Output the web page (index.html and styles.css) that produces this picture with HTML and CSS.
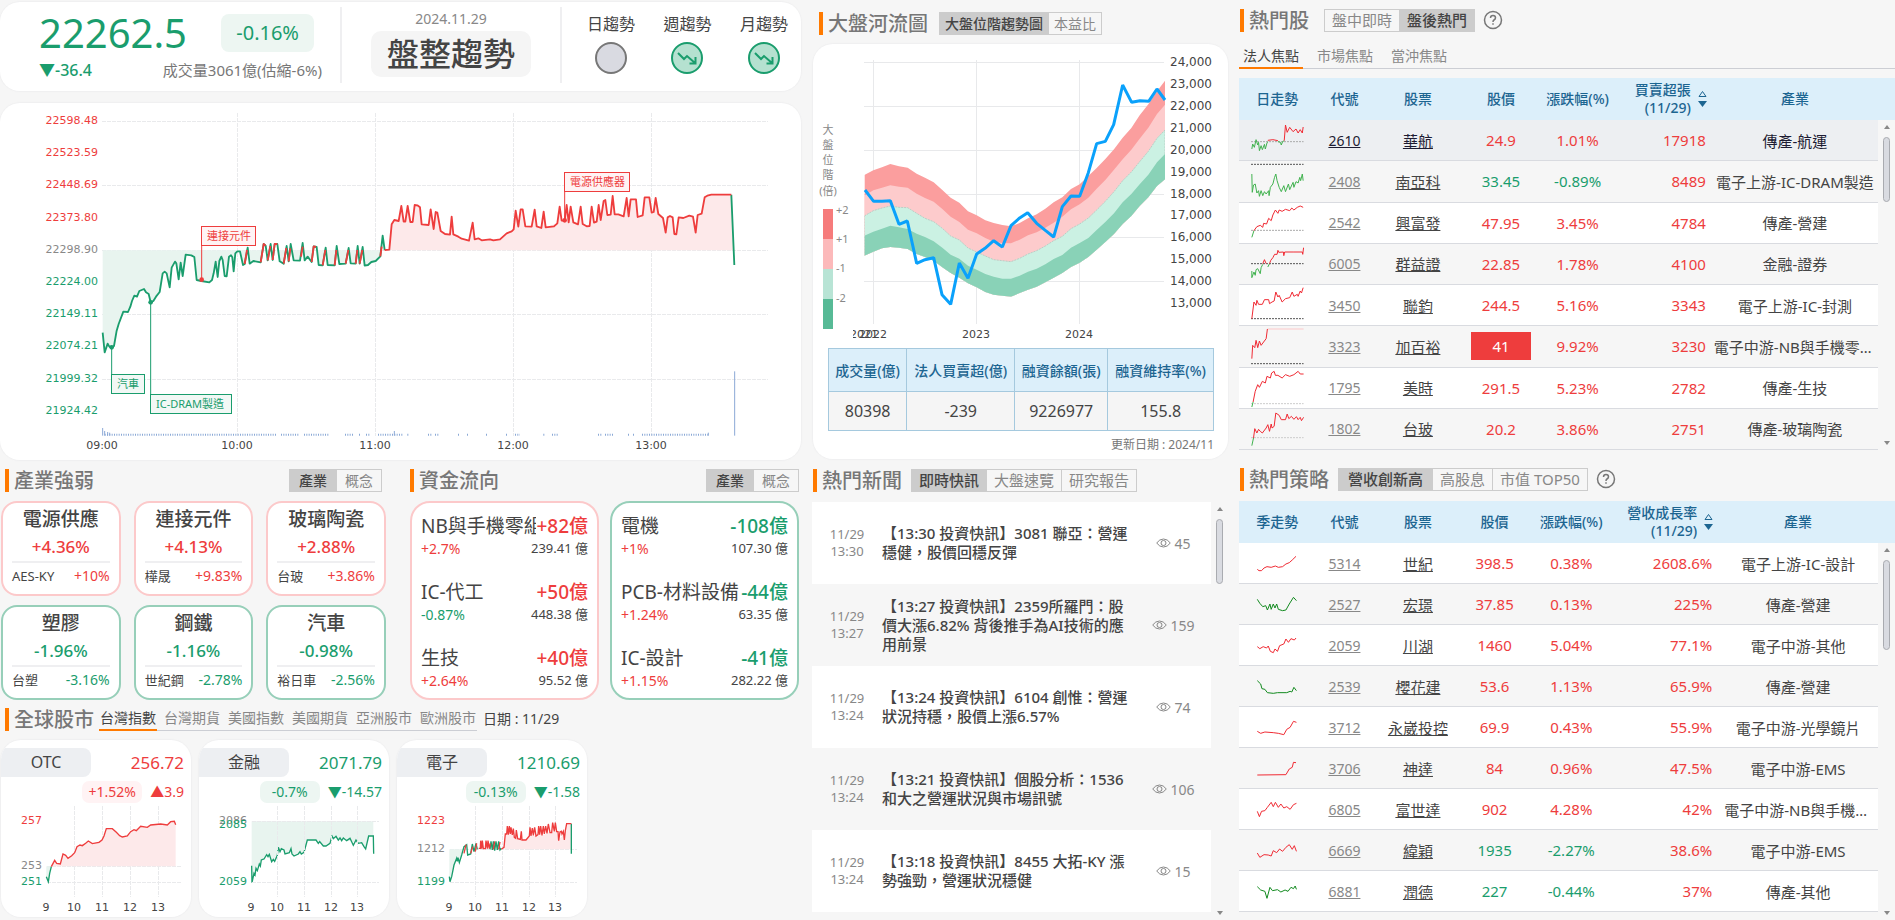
FILE: index.html
```html
<!DOCTYPE html>
<html lang="zh-Hant">
<head>
<meta charset="utf-8">
<meta name="viewport" content="width=device-width, initial-scale=1">
<title>盤整趨勢</title>
<link rel="stylesheet" href="styles.css">
</head>
<body>
<main class="dashboard">
<div class="col-left">
  <section class="card summary">
    <div class="quote">
      <div class="quote-row"><span class="index-value">22262.5</span><span class="index-badge">-0.16%</span></div>
      <div class="quote-row"><span class="index-diff">▼-36.4</span><span class="volume">成交量3061億(估縮-6%)</span></div>
    </div>
    <div class="state"><span class="state-date">2024.11.29</span><strong class="state-name">盤整趨勢</strong></div>
    <div class="trends">
      <div class="trend">日趨勢<svg width="32" height="32" viewBox="0 0 32 32"><circle cx="16" cy="16" r="15" fill="#d9dae1" stroke="#777" stroke-width="2"/></svg></div>
      <div class="trend">週趨勢<svg width="32" height="32" viewBox="0 0 32 32"><circle cx="16" cy="16" r="15" fill="#b5e1d0" stroke="#1a9d6d" stroke-width="2"/><path d="M7 11l6 6 3-3 8 7M24.500 15v6.500h-6" fill="none" stroke="#1a9d6d" stroke-width="2"/></svg></div>
      <div class="trend">月趨勢<svg width="32" height="32" viewBox="0 0 32 32"><circle cx="16" cy="16" r="15" fill="#b5e1d0" stroke="#1a9d6d" stroke-width="2"/><path d="M7 11l6 6 3-3 8 7M24.500 15v6.500h-6" fill="none" stroke="#1a9d6d" stroke-width="2"/></svg></div>
    </div>
  </section>

  <section class="card">
    <svg class="chart" viewBox="0 103 801 357" role="img" aria-label="大盤走勢">
      <g class="grid dashed"><path d="M102 121.500H768M102 185.500H768M102 250.500H768M102 314.500H768M102 379.500H768M237.500 113V436M375.500 113V436M513.500 113V436M651.500 113V436"/></g>
      <g class="axis" text-anchor="end">
        <g class="f-up"><text x="98" y="124">22598.48</text><text x="98" y="156">22523.59</text><text x="98" y="188">22448.69</text><text x="98" y="221">22373.80</text></g>
        <text class="f-mute" x="98" y="253">22298.90</text>
        <g class="f-down"><text x="98" y="285">22224.00</text><text x="98" y="317">22149.11</text><text x="98" y="349">22074.21</text><text x="98" y="382">21999.32</text><text x="98" y="414">21924.42</text></g>
      </g>
      <g class="axis" text-anchor="middle"><text x="102" y="449">09:00</text><text x="237" y="449">10:00</text><text x="375" y="449">11:00</text><text x="513" y="449">12:00</text><text x="651" y="449">13:00</text></g>
      <g transform="translate(0 100) scale(.33333)" fill="none" stroke-linejoin="round">
        <path fill="#e8f4ef" d="M308 451V698L314 757L323 731L328 740L336 742L342 738L350 692L356 672L370 635L384 636L391 620L403 587L411 590L418 573L432 567L446 582L452 607L468 590L479 576L488 520L500 520L509 562L515 503L525 485L536 538L542 488L548 528L557 464L583 471L590 540L628 547L641 520L647 485L653 531L658 483L664 470L674 528L680 529L687 470L693 466L701 514L706 460L720 454L729 495L743 451L749 491L760 483L782 487L790 451L797 451L803 481L809 451L818 480L824 451L832 451L839 484L851 491L858 451L866 484L870 451L881 481L900 482L906 451L914 481L923 470L935 486L941 451H951L956 495L968 496L976 451L983 495L1004 496L1009 451L1018 492L1037 491L1045 451L1052 490L1067 491L1072 451L1079 491L1087 451L1094 497L1127 483L1141 469L1144 451Z"/>
        <path fill="#fde9ea" d="M1168 451L1175 373L1183 360L1196 363L1204 318L1211 365L1216 365L1223 318L1231 366L1238 366L1244 315L1260 322L1265 373L1286 375L1292 328L1301 387L1307 336L1312 338L1322 393L1350 404L1355 350L1360 403L1407 422L1418 368L1424 418L1500 418L1541 388L1547 332L1555 380L1562 328L1568 328L1576 379L1595 380L1604 329L1610 379L1624 384L1631 335L1637 382L1672 370L1679 320L1685 362L1694 362L1700 315L1706 367L1712 320L1720 367L1734 373L1742 320L1748 372L1769 378L1775 320L1782 368L1790 365L1796 315L1802 360L1811 303L1816 300L1822 345L1832 344L1838 288L1844 343L1871 349L1880 294L1886 349L1892 298H1908L1913 351L1928 346L1934 292H1948L1955 338L1961 336L1967 294L1975 342L1989 354L1997 398L2003 352L2018 352L2023 402L2029 403L2036 352L2079 350L2087 398L2093 345L2105 341L2114 292L2134 284H2194L2201 451Z"/>
        <path stroke="#1a9d6d" stroke-width="5.500" d="M308 698L314 757L323 731L328 740L336 742L342 738L350 692L356 672L370 635L384 636L391 620L396 603L403 587L411 590L418 573L432 567L438 577L446 582L452 607L460 603L468 590L479 576L488 520L494 515L500 520L509 562L515 503L525 485L529 490L536 538L542 488L548 528L557 464L574 466L583 471L590 540L604 543L628 547L636 540L641 520L647 485L653 531L658 483L664 470L668 480L674 528L680 529L687 470L693 466L697 472L701 514L706 460L712 454L720 454L729 495L734 492L743 443L749 491L760 483L782 487L791 432L797 437L803 481L812 432L818 480L824 432H832L839 484L851 491L860 438L866 484L872 432L881 481L900 482L908 429L914 481L923 470L935 486L941 439L950 441L956 495L968 496L977 443L983 495L1004 496L1010 438L1018 492L1037 491L1046 444L1052 490L1067 491L1073 438L1079 491L1088 441L1094 497L1104 495L1114 486L1127 483L1141 469L1148 407L1154 450M2194 284L2203 495"/>
        <path stroke="#ee3d3d" stroke-width="5.500" d="M734 492L741 450M782 487L791 432L797 437M803 481L811 438M818 480L824 432H832M851 491L859 444M866 484L871 445M903 470L908 440M935 486L941 439L948 441M968 496L976 450M1004 496L1009 450M1037 491L1045 450M1067 491L1072 450M1079 491L1087 450M1141 469L1145 440M1154 450L1168 449L1175 373L1183 360L1196 363L1204 318L1211 365L1216 365L1223 318L1231 366L1238 366L1244 315L1252 316L1260 322L1265 373L1286 375L1292 328L1301 387L1307 336L1312 338L1322 393L1335 402L1350 404L1355 350L1360 403L1375 410L1385 416L1407 422L1418 368L1424 418L1435 415L1445 421L1470 418L1480 421L1500 418L1520 400L1535 394L1541 388L1547 332L1555 380L1562 328H1568L1576 379L1595 380L1604 329L1610 379L1624 384L1631 335L1637 382L1662 379L1672 370L1679 320L1685 362L1694 362L1700 315L1706 367L1712 320L1720 367L1734 373L1742 320L1748 372L1760 379L1769 378L1775 320L1782 368L1790 365L1796 315L1802 360L1811 303L1816 300L1822 345L1832 344L1838 288L1844 343L1855 343L1871 349L1880 294L1886 349L1892 298H1908L1913 351L1928 346L1934 292H1948L1955 338L1961 336L1967 294L1975 342L1989 354L1997 398L2003 352L2010 348L2018 352L2023 402L2029 403L2036 352L2050 354L2068 347L2079 350L2087 398L2093 345L2105 341L2114 292L2122 287L2134 284H2194"/>
        <path stroke="#8ba9d6" stroke-width="6" stroke-dasharray="3 4" d="M314 1004H828M843 1004H895M912 1004H985M1035 1004H1060M1077 1004H1081M1098 1004H1108M1134 1004H1208M1222 1004H1226M1284 1004H1296M1305 1004H1316M1374 1004H1378M1401 1004H1405M1458 1004H1462M1518 1004H1522M1545 1004H1560M1630 1004H1634M1656 1004H1676M1794 1004H1806M1815 1004H1842M1884 1004H1888M1899 1004H1903M1926 1004H2127"/>
        <path stroke="#8ba9d6" stroke-width="3" d="M308 984V1007M314 993V1007M323 996V1007M329 998V1007M1183 993V1007M2125 998V1007M2204 814V1007"/>
        <path stroke="#1a9d6d" stroke-width="3" d="M335 742V824M452 607V883"/>
        <path stroke="#ee3d3d" stroke-width="3" d="M605 438V540M1694 276V362"/>
        <g stroke="none" fill="#1a9d6d"><circle cx="335" cy="742" r="7"/><circle cx="452" cy="607" r="7"/></g>
        <g stroke="none" fill="#ee3d3d"><circle cx="605" cy="539" r="7"/><circle cx="1694" cy="361" r="7"/></g>
      </g>
      <g stroke="#1a9d6d" fill="#f2f8f5"><rect x="111.500" y="374.500" width="33" height="19"/><rect x="150.500" y="394.500" width="81" height="19"/></g>
      <g stroke="#ee3d3d" fill="#fff3f4"><rect x="201.500" y="226.500" width="54" height="19"/><rect x="564.500" y="172.500" width="65" height="19"/></g>
      <g class="flag f-down"><text x="117" y="388">汽車</text><text x="156" y="408">IC-DRAM製造</text></g>
      <g class="flag f-up"><text x="207" y="240">連接元件</text><text x="570" y="186">電源供應器</text></g>
    </svg>
  </section>

  <div class="pair">
    <section>
      <header class="head"><h2>產業強弱</h2><div class="switch end"><button class="on">產業</button><button>概念</button></div></header>
      <div class="tiles">
        <article class="tile up"><h3>電源供應</h3><b>+4.36%</b><p><span>AES-KY</span><em>+10%</em></p></article>
        <article class="tile up"><h3>連接元件</h3><b>+4.13%</b><p><span>樺晟</span><em>+9.83%</em></p></article>
        <article class="tile up"><h3>玻璃陶瓷</h3><b>+2.88%</b><p><span>台玻</span><em>+3.86%</em></p></article>
        <article class="tile down"><h3>塑膠</h3><b>-1.96%</b><p><span>台塑</span><em>-3.16%</em></p></article>
        <article class="tile down"><h3>鋼鐵</h3><b>-1.16%</b><p><span>世紀鋼</span><em>-2.78%</em></p></article>
        <article class="tile down"><h3>汽車</h3><b>-0.98%</b><p><span>裕日車</span><em>-2.56%</em></p></article>
      </div>
    </section>
    <section>
      <header class="head"><h2>資金流向</h2><div class="switch end"><button class="on">產業</button><button>概念</button></div></header>
      <div class="flows">
        <div class="flow up">
          <div class="flow-item"><h3>NB與手機零組件</h3><b>+82億</b><span class="c-up">+2.7%</span><small>239.41 億</small></div>
          <div class="flow-item"><h3>IC-代工</h3><b>+50億</b><span class="c-down">-0.87%</span><small>448.38 億</small></div>
          <div class="flow-item"><h3>生技</h3><b>+40億</b><span class="c-up">+2.64%</span><small>95.52 億</small></div>
        </div>
        <div class="flow down">
          <div class="flow-item"><h3>電機</h3><b>-108億</b><span class="c-up">+1%</span><small>107.30 億</small></div>
          <div class="flow-item"><h3>PCB-材料設備</h3><b>-44億</b><span class="c-up">+1.24%</span><small>63.35 億</small></div>
          <div class="flow-item"><h3>IC-設計</h3><b>-41億</b><span class="c-up">+1.15%</span><small>282.22 億</small></div>
        </div>
      </div>
    </section>
  </div>

  <section>
    <header class="head global-head"><h2>全球股市</h2>
      <nav class="tabs compact"><button class="on">台灣指數</button><button>台灣期貨</button><button>美國指數</button><button>美國期貨</button><button>亞洲股市</button><button>歐洲股市</button></nav>
      <span class="as-of">日期 : 11/29</span></header>
    <div class="markets">
      <article class="card market">
        <div class="m-top"><h3>OTC</h3><span class="m-value c-up">256.72</span></div>
        <div class="m-sub c-up"><span class="pill up">+1.52%</span><span>▲3.9</span></div>
        <svg class="chart" viewBox="2 805 190 112" role="img" aria-label="OTC">
          <g class="grid dashed"><path d="M48 866.500H183M48 882.500H183M75.500 806V897M103.500 806V897M131.500 806V897M159.500 806V897"/></g>
          <g transform="translate(0 700) scale(.33333)" fill="none">
            <path fill="#e8f4ef" d="M142 499V530L148 545L152 520L157 499Z"/>
            <path fill="#fde9ea" d="M157 499L167 481L173 490L184 492L192 462L207 475L227 458L234 440L260 430L268 423L280 431L309 420L322 386L340 386L362 407L370 411L385 408L395 395L425 379L445 382L455 375L505 375L515 365L530 370V499Z"/>
            <path stroke="#1a9d6d" stroke-width="4" d="M142 530L148 545L152 520L157 500"/>
            <path stroke="#ee3d3d" stroke-width="4" d="M157 500L167 481L173 490L184 492L192 462L200 466L207 475L218 467L227 458L234 440L243 435L250 437L260 430L268 423L280 431L300 427L309 420L315 408L322 386L340 386L352 397L362 407L370 411L385 408L395 395L405 389L412 392L425 379L445 382L455 375L485 372L505 375L515 365L526 364L530 374"/>
          </g>
          <g class="axis" text-anchor="end"><text class="f-up" x="43" y="824">257</text><text class="f-mute" x="43" y="869">253</text><text class="f-down" x="43" y="885">251</text></g>
          <g class="axis" text-anchor="middle"><text x="47" y="911">9</text><text x="75" y="911">10</text><text x="103" y="911">11</text><text x="131" y="911">12</text><text x="159" y="911">13</text></g>
        </svg>
      </article>
      <article class="card market">
        <div class="m-top"><h3>金融</h3><span class="m-value c-down">2071.79</span></div>
        <div class="m-sub c-down"><span class="pill down">-0.7%</span><span>▼-14.57</span></div>
        <svg class="chart" viewBox="199 805 190 112" role="img" aria-label="金融">
          <g transform="translate(0 700) scale(.33333)" fill="none">
            <path fill="#e8f4ef" d="M755 364V548L762 520L772 500L784 480L800 464L808 465L815 485L832 466L840 447L852 450L855 462L873 452L882 468L912 457L922 420L948 420L970 438L978 438L990 430L996 412L1060 425L1085 432L1097 447L1106 408H1120V364Z"/>
            <path stroke="#1a9d6d" stroke-width="4" d="M755 497L756 548L762 520L765 525L768 505L772 512L778 492L781 498L784 480L792 477L800 464L804 470L808 463L815 485L820 478L824 484L832 466L835 442L840 455L844 446L852 450L855 462L868 458L873 446L876 462L882 468L895 462L900 455L904 462L912 457L922 420L948 420L955 430L959 425L970 438L978 438L990 430L996 408L1000 416L1008 409L1015 420L1020 414L1025 422L1030 414L1040 422L1050 415L1060 436L1068 420L1075 430L1085 428L1092 440L1097 447L1106 408L1120 408L1121 461"/>
          </g>
          <g class="grid dashed"><path d="M252 821.500H379M252 882.500H379M277.500 806V897M304.500 806V897M331.500 806V897M357.500 806V897"/></g>
          <g class="axis" text-anchor="end"><text class="f-mute" x="247" y="824">2086</text><text class="f-down" x="247" y="828">2085</text><text class="f-down" x="247" y="885">2059</text></g>
          <g class="axis" text-anchor="middle"><text x="251" y="911">9</text><text x="277" y="911">10</text><text x="304" y="911">11</text><text x="331" y="911">12</text><text x="357" y="911">13</text></g>
        </svg>
      </article>
      <article class="card market">
        <div class="m-top"><h3>電子</h3><span class="m-value c-down">1210.69</span></div>
        <div class="m-sub c-down"><span class="pill down">-0.13%</span><span>▼-1.58</span></div>
        <svg class="chart" viewBox="397 805 190 112" role="img" aria-label="電子">
          <g class="grid dashed"><path d="M450 849.500H577M450 882.500H577M475.500 806V897M502.500 806V897M529.500 806V897M555.500 806V897"/></g>
          <g transform="translate(390 700) scale(.33333)" fill="none">
            <path fill="#e8f4ef" d="M178 448V545L185 530L192 495L200 475L208 488L218 448Z"/>
            <path fill="#fde9ea" d="M342 448L348 405L365 400L375 415L410 420L420 408L460 405L480 395L500 395L505 420L525 400L530 371H545V448Z"/>
            <path stroke="#1a9d6d" stroke-width="4" d="M178 530L180 545L185 530L192 495L200 475L202 484L204 473L208 488L215 465L222 440L230 434L233 465L242 462L247 432L252 455L258 430L262 448M300 448L303 424L307 450L310 424L314 452L318 424L322 450L326 424L330 450L334 445M544 371V461"/>
            <path stroke="#ee3d3d" stroke-width="4" d="M222 460L228 434M242 460L248 440M256 455L260 430M266 445H271L272 422L275 446L277 422L280 446L286 446L288 422L292 446L294 422L298 446L301 430M310 448L314 424M326 448L330 426M334 448L342 442L346 402L350 402L352 378L355 404L358 378L361 402L363 382L367 405L370 386L373 412L377 415L379 390L383 416L391 418L394 394L396 420L408 420L418 408L420 382L423 408L427 384L430 406L434 382L438 408L444 404L446 378L449 404L452 378L456 406L460 378L463 402L467 378L471 400L475 372L480 398L485 398L488 368L493 394L496 368L500 395L504 395L506 422L510 396L514 394L516 402L520 394L523 420L526 392L530 371H544"/>
          </g>
          <g class="axis" text-anchor="end"><text class="f-up" x="445" y="824">1223</text><text class="f-mute" x="445" y="852">1212</text><text class="f-down" x="445" y="885">1199</text></g>
          <g class="axis" text-anchor="middle"><text x="449" y="911">9</text><text x="475" y="911">10</text><text x="502" y="911">11</text><text x="529" y="911">12</text><text x="555" y="911">13</text></g>
        </svg>
      </article>
    </div>
  </section>
</div>

<div class="col-mid">
  <header class="head river-head"><h2>大盤河流圖</h2><div class="switch tight"><button class="on">大盤位階趨勢圖</button><button>本益比</button></div></header>
  <section class="card river">
    <svg class="chart" viewBox="813 44 415 299" role="img" aria-label="大盤河流圖">
      <clipPath id="plot"><rect x="853" y="44" width="375" height="299"/></clipPath>
      <g class="grid"><path d="M864 62.500H1164M864 106.500H1164M864 150.500H1164M864 194.500H1164M864 237.500H1164M864 281.500H1164M873.500 60V324M976.500 60V324M1079.500 60V324"/></g>
      <g transform="translate(810 0) scale(.33333)" fill="none">
        <clipPath id="bands"><path d="M163 525L190 511L216 502L241 492L267 499L293 503L320 521L345 533L371 547L397 570L422 593L448 608L474 634L500 646L526 661L551 669L577 675L603 679L629 669L654 655L680 643L706 626L731 607L757 592L783 567L809 553L835 528L860 504L886 477L912 448L938 413L964 384L989 346L1015 313L1041 274L1065 242V538L1041 558L1015 592L989 618L964 648L938 672L912 702L886 726L860 749L835 771L809 788L783 801L757 819L731 833L706 847L680 860L654 869L629 879L603 890L577 887L551 884L526 876L500 862L474 850L448 833L422 819L397 802L371 782L345 771L320 762L293 747L267 743L241 741L216 745L190 755L163 767Z"/></clipPath>
        <g clip-path="url(#bands)">
          <path fill="#fb9e9e" d="M163 240H1065V900H163Z"/>
          <path fill="#fdcbcc" d="M163 587L190 571L216 563L241 556L267 560L293 563L320 581L345 594L371 605L397 627L422 650L448 666L474 689L500 700L526 714L551 725L577 729L603 730L629 719L654 706L680 697L706 683L731 668L757 650L783 628L809 613L835 593L860 566L886 540L912 509L938 478L964 449L989 416L1015 383L1041 342L1065 314V900H163Z"/>
          <path fill="#cbf1e3" stroke="#b9cfc6" stroke-width="3" stroke-dasharray="6 3" d="M163 648L190 632L216 624L241 618L267 622L293 623L320 640L345 655L371 665L397 685L422 708L448 720L474 744L500 756L526 768L551 779L577 782L603 785L629 775L654 762L680 752L706 738L731 722L757 709L783 686L809 672L835 654L860 630L886 604L912 575L938 542L964 516L989 485L1015 454L1041 415L1065 390V900H163Z"/>
          <path fill="#89d2b7" d="M163 707L190 695L216 686L241 677L267 682L293 687L320 701L345 711L371 724L397 743L422 764L448 776L474 797L500 809L526 822L551 830L577 836L603 836L629 827L654 815L680 806L706 793L731 777L757 765L783 743L809 729L835 714L860 690L886 666L912 640L938 607L964 582L989 553L1015 524L1041 487L1065 462V900H163Z"/>
        </g>
        <path stroke="#0aa1fb" stroke-width="9" stroke-linejoin="bevel" d="M165 570L191 604H216L241 602L267 673L292 663L320 790L345 779L371 773L396 884L422 913L448 789L474 835L500 762L525 745L551 722L577 741L603 677L629 654L653 638L680 670L706 691L731 711L757 620L783 588L809 589L835 518L860 431L886 424L911 374L938 255L965 307L990 302L1016 304L1041 267L1065 300"/>
        <path fill="#f67b7b" d="M39 627H69V717H39Z"/><path fill="#fcb9ba" d="M39 717H69V807H39Z"/><path fill="#b8e4d5" d="M39 807H69V897H39Z"/><path fill="#57ba96" d="M39 897H69V987H39Z"/>
      </g>
      <g class="axis price"><text x="1170" y="66">24,000</text><text x="1170" y="88">23,000</text><text x="1170" y="110">22,000</text><text x="1170" y="132">21,000</text><text x="1170" y="154">20,000</text><text x="1170" y="176">19,000</text><text x="1170" y="198">18,000</text><text x="1170" y="219">17,000</text><text x="1170" y="241">16,000</text><text x="1170" y="263">15,000</text><text x="1170" y="285">14,000</text><text x="1170" y="307">13,000</text></g>
      <g class="axis" text-anchor="middle" clip-path="url(#plot)"><text x="864" y="338">2021</text><text x="873" y="338">2022</text><text x="976" y="338">2023</text><text x="1079" y="338">2024</text></g>
      <g class="flag f-mute" text-anchor="middle"><text x="828" y="134">大</text><text x="828" y="149">盤</text><text x="828" y="164">位</text><text x="828" y="179">階</text><text x="828" y="195">(倍)</text></g>
      <g class="flag f-mute"><text x="836" y="214">+2</text><text x="836" y="243">+1</text><text x="836" y="272">-1</text><text x="836" y="302">-2</text></g>
    </svg>
    <table class="stats">
      <thead><tr><th>成交量(億)</th><th>法人買賣超(億)</th><th>融資餘額(張)</th><th>融資維持率(%)</th></tr></thead>
      <tbody><tr><td>80398</td><td>-239</td><td>9226977</td><td>155.8</td></tr></tbody>
    </table>
    <p class="updated">更新日期 : 2024/11</p>
  </section>
  <header class="head news-head"><h2>熱門新聞</h2><div class="switch"><button class="on">即時快訊</button><button>大盤速覽</button><button>研究報告</button></div></header>
  <div class="scroller news-scroll">
    <div class="news">
      <article><time>11/29<br>13:30</time><h3>【13:30 投資快訊】3081 聯亞：營運穩健，股價回穩反彈</h3><span class="views"><svg class="eye" viewBox="0 0 15 10"><path d="M.7 5Q3.500 1 7.500 1T14.300 5Q11.500 9 7.500 9T.7 5Z"/><circle cx="7.500" cy="5" r="2.500"/></svg>45</span></article>
      <article><time>11/29<br>13:27</time><h3>【13:27 投資快訊】2359所羅門：股價大漲6.82% 背後推手為AI技術的應用前景</h3><span class="views"><svg class="eye" viewBox="0 0 15 10"><path d="M.7 5Q3.500 1 7.500 1T14.300 5Q11.500 9 7.500 9T.7 5Z"/><circle cx="7.500" cy="5" r="2.500"/></svg>159</span></article>
      <article><time>11/29<br>13:24</time><h3>【13:24 投資快訊】6104 創惟：營運狀況持穩，股價上漲6.57%</h3><span class="views"><svg class="eye" viewBox="0 0 15 10"><path d="M.7 5Q3.500 1 7.500 1T14.300 5Q11.500 9 7.500 9T.7 5Z"/><circle cx="7.500" cy="5" r="2.500"/></svg>74</span></article>
      <article><time>11/29<br>13:24</time><h3>【13:21 投資快訊】個股分析：1536 和大之營運狀況與市場訊號</h3><span class="views"><svg class="eye" viewBox="0 0 15 10"><path d="M.7 5Q3.500 1 7.500 1T14.300 5Q11.500 9 7.500 9T.7 5Z"/><circle cx="7.500" cy="5" r="2.500"/></svg>106</span></article>
      <article><time>11/29<br>13:24</time><h3>【13:18 投資快訊】8455 大拓-KY 漲勢強勁，營運狀況穩健</h3><span class="views"><svg class="eye" viewBox="0 0 15 10"><path d="M.7 5Q3.500 1 7.500 1T14.300 5Q11.500 9 7.500 9T.7 5Z"/><circle cx="7.500" cy="5" r="2.500"/></svg>15</span></article>
    </div>
    <div class="bar"><i class="thumb"></i></div>
  </div>
</div>

<div class="col-right">
  <header class="head hot-head"><h2>熱門股</h2><div class="switch"><button>盤中即時</button><button class="on">盤後熱門</button></div>
    <svg class="help" viewBox="0 0 20 20" role="img" aria-label="說明"><circle cx="10" cy="10" r="8.500"/><path d="M7.500 8Q7.500 5.500 10 5.500T12.500 7.800Q12.500 9.200 11 10Q10 10.600 10 12M10 13.300V14.800"/></svg></header>
  <nav class="tabs"><button class="on">法人焦點</button><button>市場焦點</button><button>當沖焦點</button></nav>
  <div class="thead"><table class="quotes hot"><colgroup><col><col><col><col><col><col><col></colgroup>
    <thead><tr><th>日走勢</th><th>代號</th><th>股票</th><th>股價</th><th>漲跌幅(%)</th><th><span class="sort"><span>買賣超張<br>(11/29)</span><svg viewBox="0 0 9 18"><path d="M1 6.500H8L4.500 1.500Z" fill="none" stroke="#1c6591"/><path d="M0 11H9L4.500 17Z" fill="#1c6591"/></svg></span></th><th>產業</th></tr></thead></table></div>
  <div class="scroller hot-scroll">
    <table class="quotes hot"><colgroup><col><col><col><col><col><col><col></colgroup><tbody>
      <tr class="active"><td><svg class="spark" viewBox="48 363 126 120" preserveAspectRatio="none"><path class="base" d="M48 428H173"/><path class="g" d="M50 450L52 435L56 445L60 422L64 438L66 430L68 455L72 440L75 452L80 436L82 450L86 432L88 428M112 428L118 430L120 438L123 428L127 425"/><path class="r" d="M88 424L100 422L112 425M127 425L130 378L134 400L140 385L148 398L155 390L160 402L165 392L170 402L172 384"/></svg></td><td><a href="#">2610</a></td><td><a href="#">華航</a></td><td class="c-up">24.9</td><td class="c-up">1.01%</td><td class="c-up">17918</td><td>傳產-航運</td></tr>
      <tr><td><svg class="spark" viewBox="48 486 126 120" preserveAspectRatio="none"><path class="base dark" d="M48 496H173"/><path class="g" d="M50 525L51 580L54 558L58 555L62 582L66 575L68 592L72 575L76 590L80 578L84 585L90 575L91 590L94 565L100 555L104 535L107 525L110 545L115 565L120 578L126 560L130 578L137 555L140 572L148 550L150 565L155 548L160 552L164 535L166 545L170 525L172 545"/></svg></td><td><a href="#">2408</a></td><td><a href="#">南亞科</a></td><td class="c-down">33.45</td><td class="c-down">-0.89%</td><td class="c-up">8489</td><td>電子上游-IC-DRAM製造</td></tr>
      <tr><td><svg class="spark" viewBox="48 609 126 120" preserveAspectRatio="none"><path class="base" d="M48 691H173"/><path class="g" d="M50 712L55 692"/><path class="r" d="M55 692L62 680L70 676L76 682L78 670L85 672L90 655L96 662L100 645L106 630L112 640L115 630L122 634L130 628L140 632L145 624L150 630L158 622L165 618L172 622"/></svg></td><td><a href="#">2542</a></td><td><a href="#">興富發</a></td><td class="c-up">47.95</td><td class="c-up">3.45%</td><td class="c-up">4784</td><td>傳產-營建</td></tr>
      <tr><td><svg class="spark" viewBox="48 41 126 120" preserveAspectRatio="none"><path class="base dark" d="M48 100H173"/><path class="g" d="M50 122V142L55 125L58 135L60 118L64 115L70 130L72 112L76 102M88 110L92 100"/><path class="r" d="M76 100L80 88L84 100M92 100L95 90L100 82L104 72L110 72L112 60L114 66L125 65L126 76L128 65L150 65L170 65L171 72L173 52"/></svg></td><td><a href="#">6005</a></td><td><a href="#">群益證</a></td><td class="c-up">22.85</td><td class="c-up">1.78%</td><td class="c-up">4100</td><td>金融-證券</td></tr>
      <tr><td><svg class="spark" viewBox="48 164 126 120" preserveAspectRatio="none"><path class="base dark" d="M48 265H173"/><path class="r" d="M50 265L55 215L60 225L62 210L66 222L75 222L80 208L90 208L92 220L98 215L103 212L107 185L112 200L115 195L122 215L130 205L140 202L146 185L150 198L158 192L160 198L165 182L168 188L172 172"/></svg></td><td><a href="#">3450</a></td><td><a href="#">聯鈞</a></td><td class="c-up">244.5</td><td class="c-up">5.16%</td><td class="c-up">3343</td><td>電子上游-IC-封測</td></tr>
      <tr><td><svg class="spark" viewBox="48 287 126 120" preserveAspectRatio="none"><path class="base dark" d="M48 400H173"/><path class="limit" d="M87 296H173"/><path class="r" d="M50 385L52 345L57 352L60 330L64 352L68 332L72 345L78 335L84 325L87 296"/></svg></td><td><a href="#">3323</a></td><td><a href="#">加百裕</a></td><td><span class="hit">41</span></td><td class="c-up">9.92%</td><td class="c-up">3230</td><td>電子中游-NB與手機零組件</td></tr>
      <tr><td><svg class="spark" viewBox="48 410 126 120" preserveAspectRatio="none"><path class="base light" d="M48 517H173"/><path class="g" d="M50 527L53 512"/><path class="r" d="M53 512L58 480L64 460L68 468L75 450L82 455L86 435L94 440L97 425L103 420L106 432L112 432L122 440L130 430L140 435L150 430L160 420L165 428L173 428"/></svg></td><td><a href="#">1795</a></td><td><a href="#">美時</a></td><td class="c-up">291.5</td><td class="c-up">5.23%</td><td class="c-up">2782</td><td>傳產-生技</td></tr>
      <tr><td><svg class="spark" viewBox="48 533 126 120" preserveAspectRatio="none"><path class="base light" d="M48 619H173"/><path class="g" d="M50 643L54 620"/><path class="r" d="M54 620L57 592L62 605L66 594L70 600L75 605L84 590L88 580L92 600L96 578L98 590L103 585L107 545L115 552L120 565L130 565L134 548L138 562L144 555L150 564L156 556L160 565L165 558L168 568L173 558"/></svg></td><td><a href="#">1802</a></td><td><a href="#">台玻</a></td><td class="c-up">20.2</td><td class="c-up">3.86%</td><td class="c-up">2751</td><td>傳產-玻璃陶瓷</td></tr>
    </tbody></table>
    <div class="bar"><i class="thumb"></i></div>
  </div>

  <header class="head pick-head"><h2>熱門策略</h2><div class="switch"><button class="on">營收創新高</button><button>高股息</button><button>市值 TOP50</button></div>
    <svg class="help" viewBox="0 0 20 20" role="img" aria-label="說明"><circle cx="10" cy="10" r="8.500"/><path d="M7.500 8Q7.500 5.500 10 5.500T12.500 7.800Q12.500 9.200 11 10Q10 10.600 10 12M10 13.300V14.800"/></svg></header>
  <div class="thead"><table class="quotes pick"><colgroup><col><col><col><col><col><col><col></colgroup>
    <thead><tr><th>季走勢</th><th>代號</th><th>股票</th><th>股價</th><th>漲跌幅(%)</th><th><span class="sort"><span>營收成長率<br>(11/29)</span><svg viewBox="0 0 9 18"><path d="M1 6.500H8L4.500 1.500Z" fill="none" stroke="#1c6591"/><path d="M0 11H9L4.500 17Z" fill="#1c6591"/></svg></span></th><th>產業</th></tr></thead></table></div>
  <div class="scroller pick-scroll">
    <table class="quotes pick"><colgroup><col><col><col><col><col><col><col></colgroup><tbody>
      <tr><td><svg class="spark" viewBox="47 267 126 120" preserveAspectRatio="none"><path class="r" d="M62 346L66 350L72 350L78 342L85 338L95 340L105 336L112 340L122 338L130 330L138 326L145 318L154 307"/></svg></td><td><a href="#">5314</a></td><td><a href="#">世紀</a></td><td class="c-up">398.5</td><td class="c-up">0.38%</td><td class="c-up">2608.6%</td><td>電子上游-IC-設計</td></tr>
      <tr><td><svg class="spark" viewBox="47 390 126 120" preserveAspectRatio="none"><path class="dg" d="M62 436L68 448L75 458L82 455L86 468L92 450L95 466L100 450L104 462L108 450L112 466L122 470L130 468L138 450L148 430L155 440"/></svg></td><td><a href="#">2527</a></td><td><a href="#">宏璟</a></td><td class="c-up">37.85</td><td class="c-up">0.13%</td><td class="c-up">225%</td><td>傳產-營建</td></tr>
      <tr><td><svg class="spark" viewBox="47 513 126 120" preserveAspectRatio="none"><path class="r" d="M62 578L68 584L76 578L84 582L88 576L93 592L100 596L104 585L110 592L115 575L125 570L130 555L136 565L142 554L150 558L154 552"/></svg></td><td><a href="#">2059</a></td><td><a href="#">川湖</a></td><td class="c-up">1460</td><td class="c-up">5.04%</td><td class="c-up">77.1%</td><td>電子中游-其他</td></tr>
      <tr><td><svg class="spark" viewBox="47 636 126 120" preserveAspectRatio="none"><path class="dg" d="M62 680L70 690L73 704L80 706L86 716L100 718L110 716L132 716L140 712L144 714L149 700L155 710"/></svg></td><td><a href="#">2539</a></td><td><a href="#">櫻花建</a></td><td class="c-up">53.6</td><td class="c-up">1.13%</td><td class="c-up">65.9%</td><td>傳產-營建</td></tr>
      <tr><td><svg class="spark" viewBox="47 759 126 120" preserveAspectRatio="none"><path class="r" d="M62 832L70 838L80 834L100 836L112 838L125 842L132 826L140 820L148 802L155 805"/></svg></td><td><a href="#">3712</a></td><td><a href="#">永崴投控</a></td><td class="c-up">69.9</td><td class="c-up">0.43%</td><td class="c-up">55.9%</td><td>電子中游-光學鏡片</td></tr>
      <tr><td><svg class="spark" viewBox="47 882 126 120" preserveAspectRatio="none"><path class="r" d="M62 963L130 962L138 945L145 940L148 925L154 926"/></svg></td><td><a href="#">3706</a></td><td><a href="#">神達</a></td><td class="c-up">84</td><td class="c-up">0.96%</td><td class="c-up">47.5%</td><td>電子中游-EMS</td></tr>
      <tr><td><svg class="spark" viewBox="47 1005 126 120" preserveAspectRatio="none"><path class="r" d="M62 1072L67 1088L72 1072L80 1070L86 1060L95 1045L100 1058L105 1045L112 1060L118 1050L125 1062L132 1058L140 1066L148 1052L155 1048"/></svg></td><td><a href="#">6805</a></td><td><a href="#">富世達</a></td><td class="c-up">902</td><td class="c-up">4.28%</td><td class="c-up">42%</td><td>電子中游-NB與手機零組件</td></tr>
      <tr><td><svg class="spark" viewBox="47 1128 126 120" preserveAspectRatio="none"><path class="r" d="M62 1197L68 1210L78 1202L88 1203L95 1206L100 1190L108 1196L115 1185L122 1192L130 1180L138 1172L145 1186L150 1175L155 1192"/></svg></td><td><a href="#">6669</a></td><td><a href="#">緯穎</a></td><td class="c-down">1935</td><td class="c-down">-2.27%</td><td class="c-up">38.6%</td><td>電子中游-EMS</td></tr>
      <tr><td><svg class="spark" viewBox="47 1251 126 120" preserveAspectRatio="none"><path class="dg" d="M62 1298L70 1308L80 1312L85 1333L92 1300L98 1310L110 1307L118 1314L128 1308L135 1312L142 1300L148 1304L152 1296L155 1306"/></svg></td><td><a href="#">6881</a></td><td><a href="#">潤德</a></td><td class="c-down">227</td><td class="c-down">-0.44%</td><td class="c-up">37%</td><td>傳產-其他</td></tr>
    </tbody></table>
    <div class="bar"><i class="thumb"></i></div>
  </div>
</div>
</main>
</body>
</html>
```

FILE: styles.css
```css
* { box-sizing: border-box; }
body {
  margin: 0;
  background: #f6f6f6;
  color: #444;
  font-family: "Noto Sans", "Noto Sans CJK TC", sans-serif;
  font-size: 15px;
}
h2, h3, p { margin: 0; font-weight: 400; }
em { font-style: normal; }
button {
  margin: 0;
  padding: 0;
  border: 0;
  background: none;
  font: inherit;
  color: #888;
  cursor: pointer;
  white-space: nowrap;
}
.c-up { color: #ee3d3d; }
.c-down { color: #1a9d6d; }

.dashboard {
  display: grid;
  grid-template-columns: minmax(0, 801fr) minmax(0, 416fr) minmax(0, 656fr);
  column-gap: 11px;
  min-height: 100vh;
}
.col-left, .col-mid, .col-right { display: flex; flex-direction: column; }
.col-left { padding-top: 2px; }
.card {
  background: #fff;
  border-radius: 20px;
  box-shadow: 0 0 1px 1px #f0f0f1;
}
.chart { display: block; width: 100%; height: auto; }
.grid path { fill: none; stroke: #e8e9eb; }
.grid.dashed path { stroke: #e9eaec; stroke-dasharray: 4 1; }
.axis { font: 11px "DejaVu Sans", sans-serif; fill: #444; }
.axis.price { font-size: 12px; }
.flag { font-size: 11px; }
.f-up { fill: #ee3d3d; }
.f-down { fill: #1a9d6d; }
.f-mute { fill: #888; }

/* index summary */
.summary {
  display: grid;
  grid-template-columns: 340fr 222fr 239fr;
  height: 89px;
  margin-bottom: 12px;
  padding: 5px 0 8px;
}
.quote {
  display: flex;
  flex-direction: column;
  justify-content: space-between;
  padding: 4px 18px 2px 39px;
}
.quote-row { display: flex; justify-content: space-between; align-items: center; }
.index-value { font-size: 40px; line-height: 44px; color: #1a9d6d; }
.index-badge {
  margin-right: 8px;
  padding: 0 15px;
  border-radius: 8px;
  background: #edf6f2;
  color: #1a9d6d;
  font-size: 20px;
  line-height: 38px;
}
.index-diff { font-size: 16px; line-height: 22px; font-weight: 500; color: #1a9d6d; }
.volume { font-size: 15px; line-height: 22px; color: #777; }
.state {
  display: flex;
  flex-direction: column;
  align-items: center;
  border: solid #efeff1;
  border-width: 0 2px;
}
.state-date { font-size: 14px; line-height: 24px; color: #888; }
.state-name {
  padding: 0 16px;
  border-radius: 10px;
  background: #f5f5f5;
  font-size: 32px;
  font-weight: 500;
  line-height: 46px;
}
.trends { display: flex; justify-content: space-between; padding: 5px 13px 0 25px; }
.trend {
  display: flex;
  flex-direction: column;
  align-items: center;
  gap: 6px;
  font-size: 16px;
  line-height: 24px;
}

/* section titles */
.head { display: flex; align-items: center; height: 24px; }
.head h2 {
  padding-left: 5px;
  border-left: 4px solid #ff7a00;
  font-size: 20px;
  font-weight: 500;
  line-height: 23px;
  color: #777;
  white-space: nowrap;
}
.switch {
  display: flex;
  margin-left: 9px;
  border: 1px solid #ccc;
  line-height: 21px;
}
.switch button { padding: 0 7px; }
.switch button + button { border-left: 1px solid #ccc; }
.switch .on { background: #ccc; color: #444; font-weight: 500; }
.switch.end { margin-left: auto; font-size: 14px; }
.switch.end button { padding: 0 8px; }
.switch.end .on { padding: 0 9px; }
.switch.tight { margin-left: 11px; font-size: 14px; }
.switch.tight button { padding: 0 5px; }
.help { width: 20px; height: 20px; margin-left: 8px; fill: none; stroke: #777; stroke-width: 1.5; }

.tabs { display: flex; gap: 10px; font-size: 14px; border-bottom: 1px solid #ccced4; }
.tabs button { padding: 0 4px; line-height: 22px; margin-bottom: -1px; border-bottom: 2px solid transparent; }
.tabs .on { color: #444; border-color: #ff7a00; }
.tabs.compact { gap: 6px; margin-left: 5px; }
.tabs.compact button { padding: 0 1px; }

/* industry tiles and money flow */
.pair {
  display: grid;
  grid-template-columns: 386fr 389fr;
  column-gap: 24px;
  padding: 8px 2px 0 0;
}
.pair section:first-child .head { margin-left: 5px; margin-right: 4px; }
.tiles {
  display: grid;
  grid-template-columns: repeat(3, 1fr);
  gap: 9px 13px;
  margin: 9px 0 0 1px;
}
.tile {
  height: 95px;
  padding: 3px 9px 0;
  border: 2px solid;
  border-radius: 16px;
  background: #fff;
  text-align: center;
}
.tile.up, .flow.up { border-color: #fcc9ca; }
.tile.down, .flow.down { border-color: #97cfb9; }
.tile h3 { font-size: 19px; line-height: 27px; font-weight: 500; }
.tile b { display: block; font-size: 17px; line-height: 28px; font-weight: 500; }
.tile.up b, .tile.up em, .flow.up b { color: #ee3d3d; }
.tile.down b, .tile.down em, .flow.down b { color: #1a9d6d; }
.tile p {
  display: flex;
  justify-content: space-between;
  border-top: 2px solid #efeff1;
  font-size: 13px;
  line-height: 26px;
}
.tile em { font-size: 14px; }
.flows { display: grid; grid-template-columns: 1fr 1fr; gap: 11px; margin-top: 9px; }
.flow {
  display: flex;
  flex-direction: column;
  justify-content: space-between;
  height: 199px;
  padding: 9px;
  border: 2px solid;
  border-radius: 20px;
  background: #fff;
}
.flow-item { display: grid; grid-template-columns: minmax(0, 1fr) auto; line-height: 17px; }
.flow-item h3 { overflow: hidden; font-size: 19px; line-height: 28px; white-space: nowrap; }
.flow-item b { font-size: 19px; line-height: 28px; font-weight: 500; }
.flow-item span { font-size: 14px; }
.flow-item small { font-size: 13px; text-align: right; margin-left: -20px; }

/* global markets */
.global-head { margin: 7px 0 0 5px; }
.as-of { margin-left: 6px; font-size: 14px; line-height: 20px; }
.markets {
  display: grid;
  grid-template-columns: repeat(3, 190fr) 206fr;
  gap: 8px;
  padding: 9px 0 3px 1px;
}
.market { overflow: hidden; }
.m-top { display: flex; justify-content: space-between; align-items: center; padding: 8px 7px 0 0; }
.m-top h3 {
  flex: 0 0 90px;
  border-radius: 0 8px 8px 0;
  background: #edeff2;
  font-size: 16px;
  line-height: 29px;
  text-align: center;
}
.m-value { font-size: 17px; line-height: 29px; }
.m-sub { display: flex; justify-content: flex-end; gap: 8px; padding: 4px 7px 2px 0; font-size: 14px; line-height: 22px; }
.pill { width: 60px; border-radius: 7px; text-align: center; }
.pill.up { background: #fff3f4; }
.pill.down { background: #edf6f2; }

/* river chart */
.river-head { margin: 11px 0 9px 7px; }
.river { margin-left: 1px; }
.stats {
  width: calc(100% - 29px);
  margin: 5px 14px 0 15px;
  border-collapse: collapse;
  text-align: center;
  white-space: nowrap;
}
.stats th, .stats td { padding: 0 4px; border: 1px solid #a5c9de; }
.stats th { height: 43px; background: #dceffa; color: #1c6591; font-size: 14px; font-weight: 500; }
.stats td { height: 39px; background: #f5f5f5; font-size: 16px; }
.updated { padding: 4px 14px 4px 0; font-size: 12px; line-height: 20px; color: #777; text-align: right; }

/* news */
.news-head { margin: 9px 0 10px 1px; }
.scroller { display: flex; overflow: hidden; }
.news-scroll { flex: 1 1 0; }
.news { flex: 1; }
.news article {
  display: grid;
  grid-template-columns: 70px minmax(0, 254px) minmax(60px, 1fr);
  align-items: center;
  min-height: 82px;
}
.news article:nth-child(odd) { background: #fff; }
.news time { font-size: 13px; line-height: 17px; text-align: center; color: #888; }
.news h3 { font-size: 15px; line-height: 19px; font-weight: 500; }
.views { display: flex; justify-content: center; align-items: center; gap: 3px; font-size: 14px; color: #888; }
.eye { width: 15px; height: 10px; fill: none; stroke: #888; }
.bar {
  display: flex;
  flex-direction: column;
  align-items: center;
  flex: 0 0 17px;
  background: #f6f6f6;
  padding: 5px 0;
}
.bar::before, .bar::after { content: ""; border: 3px solid transparent; }
.bar::before { border-top: 0; border-bottom: 4px solid #888; }
.bar::after { border-bottom: 0; border-top: 4px solid #888; margin-top: auto; }
.thumb { width: 7px; height: 65px; margin-top: 8px; border: 1px solid #a9abb0; border-radius: 4px; background: #d9dbe1; }
.pick-scroll .thumb { height: 90px; }

/* stock tables */
.hot-head { margin: 8px 0 13px 1px; }
.hot-head .switch { margin-left: 15px; }
.pick-head { margin: 17px 0 10px 1px; }
.pick-head .on { padding: 0 9px; }
.col-right .tabs { margin-bottom: 9px; }
.thead { padding-right: 17px; background: #dceffa; }
.quotes { width: 100%; border-collapse: separate; border-spacing: 0; table-layout: fixed; text-align: center; white-space: nowrap; }
.quotes th { height: 42px; padding: 0; color: #1c6591; font-size: 14px; font-weight: 500; line-height: 18px; }
.quotes td { height: 41px; padding: 0; border-bottom: 1px solid #d9dbe0; }
.quotes a { color: inherit; }
.quotes td:nth-child(2) { color: #888; font-size: 14px; }
.quotes td:nth-child(6) { padding-right: 6px; text-align: right; }
.quotes td:nth-child(7) { overflow: hidden; padding: 0 2px; text-overflow: ellipsis; }
.pick td:nth-child(7) { padding: 0 6px; }
.hot tr:nth-child(odd) td, .pick tr:nth-child(odd) td { background: #fff; }
.hot .active td, .hot .active td:nth-child(2) { color: #1d1c33; }
.hot .active td.c-up { color: #ee3d3d; }
.hot tr.active td { background: #edeff2; }
.sort { display: flex; justify-content: flex-end; align-items: center; gap: 7px; padding-right: 5px; text-align: right; }
.sort svg { width: 9px; height: 18px; }
.quotes col:nth-child(1) { width: 12%; }
.quotes col:nth-child(2) { width: 9%; }
.quotes col:nth-child(3) { width: 14%; }
.hot col:nth-child(4) { width: 12%; }
.hot col:nth-child(5) { width: 12%; }
.hot col:nth-child(6) { width: 15%; }
.pick col:nth-child(4) { width: 10%; }
.pick col:nth-child(5) { width: 14%; }
.pick col:nth-child(6) { width: 16%; }
.hit { display: block; margin: 0 8px; background: #ee3d3d; color: #fff; line-height: 28px; }
.hot-scroll { height: 330px; }
.pick-scroll { flex: 1 1 0; align-items: stretch; }
.pick-scroll .quotes { align-self: flex-start; }
.spark { display: block; width: 53px; height: 40px; margin: 0 auto; }
.spark path { fill: none; vector-effect: non-scaling-stroke; }
.spark .r { stroke: #f02a33; }
.spark .g { stroke: #41b24f; }
.spark .dg { stroke: #118a1e; }
.spark .base { stroke: #aaa; stroke-dasharray: 2 1; }
.spark .base.dark { stroke: #555; }
.spark .base.light { stroke: #ccc; }
.spark .limit { stroke: #fcc9ca; }
```
